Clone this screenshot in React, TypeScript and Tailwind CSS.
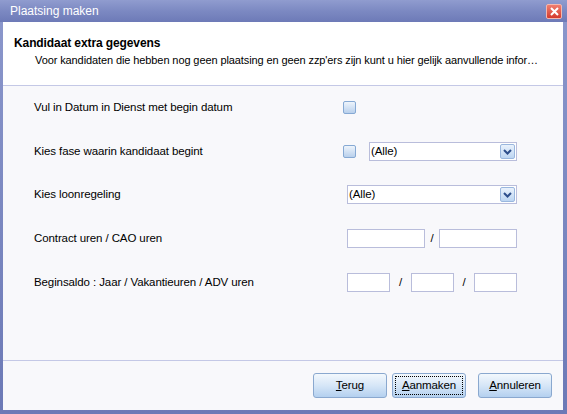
import React from "react";

const font = { fontFamily: '"Liberation Sans", Arial, sans-serif' };

function Checkbox() {
  return (
    <div className="w-[13px] h-[13px] rounded-[2px] border border-[#86a9d4] bg-gradient-to-b from-[#eef4fb] via-[#d3e2f4] to-[#b9d0ec] shrink-0" />
  );
}

function DropBtn() {
  return (
    <div className="w-[15px] h-[15px] rounded-[2px] border border-[#9ab7de] bg-gradient-to-b from-[#eaf2fc] to-[#bcd5f2] flex items-center justify-center">
      <svg width="9" height="6" viewBox="0 0 9 6">
        <polyline points="1,1 4.5,4.5 8,1" fill="none" stroke="#2d4e8c" strokeWidth="2" />
      </svg>
    </div>
  );
}

function Select({ w }: { w: string }) {
  return (
    <div className={`${w} h-[19px] border border-[#b9bddb] bg-white flex items-center justify-between pl-[1px] pr-[1px]`}>
      <span className="text-[11.5px] text-black leading-none">(Alle)</span>
      <DropBtn />
    </div>
  );
}

function Input({ w }: { w: string }) {
  return <div className={`${w} h-[19px] border border-[#b9bddb] bg-white`} />;
}

function Button({ label, focus }: { label: React.ReactNode; focus?: boolean }) {
  return (
    <div className="w-[74px] h-[25px] rounded-[3px] border border-[#8aa8cf] bg-gradient-to-b from-[#f3f8fd] via-[#d6e6f7] to-[#b4d0ef] flex items-center justify-center p-[2px]">
      <div
        className={`w-full h-full flex items-center justify-center text-[11.5px] tracking-[-0.1px] text-black ${
          focus ? "border border-dotted border-black" : ""
        }`}
      >
        {label}
      </div>
    </div>
  );
}

export default function App() {
  return (
    <div
      className="w-[567px] h-[414px] flex flex-col bg-gradient-to-b from-[#8c98cc] to-[#6c79b6]"
      style={font}
    >
      {/* Title bar */}
      <div className="h-[22px] shrink-0 flex items-center justify-between pl-[10px] pr-[5px] bg-gradient-to-b from-[#909ccf] via-[#7c89c2] to-[#6d7ab7]">
        <span className="text-white text-[12px] leading-none">Plaatsing maken</span>
        <div className="w-[16px] h-[15px] rounded-[2px] border border-[#f3b7ae] bg-gradient-to-b from-[#ef7d6f] to-[#d4382c] flex items-center justify-center">
          <svg width="9" height="9" viewBox="0 0 9 9">
            <path d="M1 1 L8 8 M8 1 L1 8" stroke="white" strokeWidth="2" />
          </svg>
        </div>
      </div>

      {/* Client area */}
      <div className="flex-1 flex flex-col ml-[3px] mr-[4px] mb-[4px] bg-[#f8f8fb]">
        {/* Header */}
        <div className="h-[64px] shrink-0 bg-white border-b border-[#c4c8e6] pl-[11px] pt-[14px] pr-[20px] overflow-hidden">
          <div className="text-[12px] font-bold text-black leading-[14px] tracking-[-0.1px]">Kandidaat extra gegevens</div>
          <div className="text-[11px] text-black leading-[14px] pl-[21px] pt-[3px] whitespace-nowrap tracking-[-0.1px]">
            Voor kandidaten die hebben nog geen plaatsing en geen zzp'ers zijn kunt u hier gelijk aanvullende infor…
          </div>
        </div>

        {/* Body */}
        <div className="h-[275px] shrink-0 border-b border-[#c4c8e6] pl-[31px] pt-[12px] text-[11.5px] tracking-[-0.1px] text-black">
          <div className="flex items-center h-[19px]">
            <div className="w-[309px] pt-[1px]">Vul in Datum in Dienst met begin datum</div>
            <Checkbox />
          </div>
          <div className="flex items-center h-[19px] mt-[25px]">
            <div className="w-[309px] pt-[1px]">Kies fase waarin kandidaat begint</div>
            <Checkbox />
            <div className="ml-[13px]">
              <Select w="w-[148px]" />
            </div>
          </div>
          <div className="flex items-center h-[19px] mt-[24px]">
            <div className="w-[313px] pt-[1px]">Kies loonregeling</div>
            <Select w="w-[170px]" />
          </div>
          <div className="flex items-center h-[19px] mt-[25px]">
            <div className="w-[313px] pt-[1px]">Contract uren / CAO uren</div>
            <Input w="w-[78px]" />
            <span className="w-[14px] text-center">/</span>
            <Input w="w-[78px]" />
          </div>
          <div className="flex items-center h-[19px] mt-[25px]">
            <div className="w-[313px] pt-[1px]">Beginsaldo : Jaar / Vakantieuren / ADV uren</div>
            <Input w="w-[43px]" />
            <span className="w-[21px] text-center">/</span>
            <Input w="w-[43px]" />
            <span className="w-[20px] text-center">/</span>
            <Input w="w-[43px]" />
          </div>
        </div>

        {/* Buttons */}
        <div className="flex-1 flex justify-end items-start pt-[12px] pr-[11px]">
          <Button label={<span><u>T</u>erug</span>} />
          <div className="ml-[5px]">
            <Button focus label={<span><u>A</u>anmaken</span>} />
          </div>
          <div className="ml-[12px]">
            <Button label={<span><u>A</u>nnuleren</span>} />
          </div>
        </div>
      </div>
    </div>
  );
}
